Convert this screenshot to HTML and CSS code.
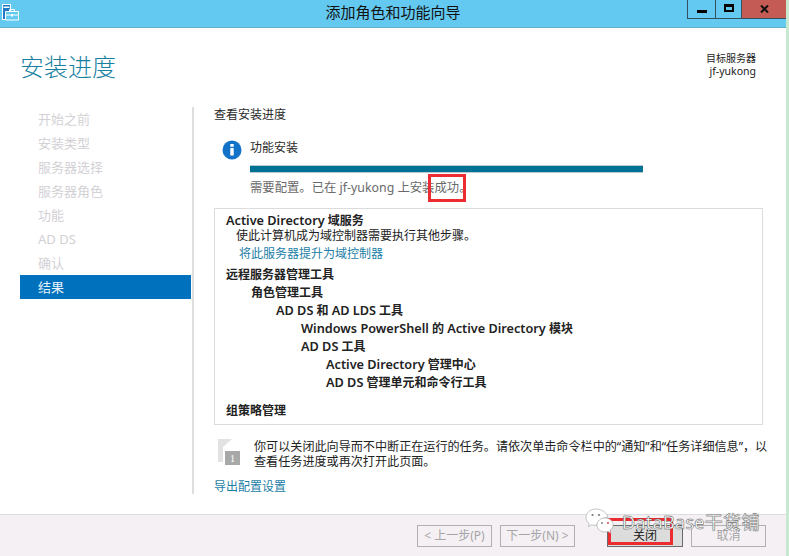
FILE: index.html
```html
<!DOCTYPE html>
<html lang="zh">
<head>
<meta charset="utf-8">
<title>添加角色和功能向导</title>
<link rel="stylesheet" href="styles.css">
</head>
<body>
<div class="window">
  <header class="titlebar">
    <svg class="app-icon" width="17" height="17" viewBox="0 0 17 17">
      <rect x="0.500" y="0.500" width="8" height="15" fill="#1f78c8" stroke="#fff"/>
      <rect x="1.500" y="2.500" width="6" height="1.500" fill="#fff"/>
      <path d="M3.500 7.500h13v8.500h-13z" fill="#63c9f0" stroke="#fff"/>
      <path d="M7.500 7.500V5.500h5v2M3.500 11h13" fill="none" stroke="#fff"/>
      <rect x="9" y="10" width="2" height="2.500" fill="#fff"/>
    </svg>
    <div class="title">添加角色和功能向导</div>
    <div class="controls">
      <div class="ctl ctl-min"><span class="min-glyph"></span></div>
      <div class="ctl ctl-max"><span class="max-glyph"></span></div>
      <div class="ctl ctl-close">
        <svg width="9" height="8" viewBox="0 0 9 8"><path d="M1 0.500L8 7.500M8 0.500L1 7.500" stroke="#111" stroke-width="2" fill="none"/></svg>
      </div>
    </div>
  </header>

  <div class="head">
    <h1 class="page-title">安装进度</h1>
    <div class="server"><div>目标服务器</div><div class="server-name">jf-yukong</div></div>
  </div>

  <div class="body">
    <nav class="nav">
      <div class="nav-item">开始之前</div>
      <div class="nav-item">安装类型</div>
      <div class="nav-item">服务器选择</div>
      <div class="nav-item">服务器角色</div>
      <div class="nav-item">功能</div>
      <div class="nav-item">AD DS</div>
      <div class="nav-item">确认</div>
      <div class="nav-item active">结果</div>
    </nav>
    <main class="main">
      <div class="section-title">查看安装进度</div>
      <div class="status">
        <svg class="info" width="20" height="20" viewBox="0 0 20 20">
          <circle cx="10" cy="10" r="9.500" fill="#1272c8"/>
          <rect x="8.300" y="8" width="3.400" height="7.500" fill="#fff"/>
          <rect x="8.300" y="4" width="3.400" height="2.800" fill="#fff"/>
        </svg>
        <div class="status-body">
          <div class="status-label">功能安装</div>
          <div class="progress"></div>
          <div class="status-text">需要配置。已在 jf-yukong 上安装成功。</div>
        </div>
      </div>
      <div class="results">
        <div class="row b l0 r-first"><span class="en">Active Directory</span> 域服务</div>
        <div class="row l0a">使此计算机成为域控制器需要执行其他步骤。</div>
        <div class="row l0b link">将此服务器提升为域控制器</div>
        <div class="row b l0 gap-a">远程服务器管理工具</div>
        <div class="row b l1">角色管理工具</div>
        <div class="row b l2"><span class="en">AD DS</span> 和 <span class="en">AD LDS</span> 工具</div>
        <div class="row b l3"><span class="en">Windows PowerShell</span> 的 <span class="en">Active Directory</span> 模块</div>
        <div class="row b l3"><span class="en">AD DS</span> 工具</div>
        <div class="row b l4"><span class="en">Active Directory</span> 管理中心</div>
        <div class="row b l4"><span class="en">AD DS</span> 管理单元和命令行工具</div>
        <div class="row b l0 gap-b">组策略管理</div>
      </div>
      <div class="note">
        <svg class="flag" width="22" height="26" viewBox="0 0 22 26">
          <path d="M0 0H14L5 8V23H0z" fill="#e2e2e2"/>
          <rect x="7" y="12" width="15" height="14" fill="#a8a8a8"/>
          <text x="14.500" y="23" text-anchor="middle" font-size="10" font-family="Liberation Serif" fill="#fff">1</text>
        </svg>
        <p class="note-text">你可以关闭此向导而不中断正在运行的任务。请依次单击命令栏中的“通知”和“任务详细信息”，以查看任务进度或再次打开此页面。</p>
      </div>
      <div class="link export">导出配置设置</div>
    </main>
  </div>

  <footer class="footer">
    <button class="btn">&lt; 上一步(P)</button>
    <button class="btn btn-next">下一步(N) &gt;</button>
    <button class="btn btn-close">关闭</button>
    <button class="btn">取消</button>
  </footer>

  <div class="hl hl-success"></div>
  <div class="hl hl-close"></div>
  <div class="watermark">
    <svg width="32" height="26" viewBox="0 0 32 26">
      <path d="M11 1C5 1 1 5 1 9.500c0 2.500 1.200 4.500 3.200 6L3.400 18.500l3.200-1.700c1.400.4 2.800.6 4.400.6 4.500-7 9-8 12-8C22 5 17 1 11 1z" fill="#fff" stroke="#aaa" stroke-width=".7"/>
      <path d="M20 10c-4.500 0-8 3-8 7s3.500 7 8 7c1 0 2-.2 3-.5l2.800 1.500-.7-2.500c1.900-1.300 3-3.300 3-5.500 0-4-3.500-7-8-7z" fill="#fff" stroke="#aaa" stroke-width=".7"/>
      <circle cx="7.500" cy="7" r="1.100" fill="#777"/><circle cx="14" cy="7" r="1.100" fill="#777"/>
      <circle cx="17" cy="15" r=".9" fill="#777"/><circle cx="23" cy="15" r=".9" fill="#e33"/>
    </svg>
    <span class="wm-text">DataBase干货铺</span>
  </div>
  <div class="edge"></div>
</div>
</body>
</html>
```

FILE: styles.css
```css
* { box-sizing: border-box; }
html, body { margin: 0; padding: 0; }
body {
  width: 789px; height: 556px; overflow: hidden; background: #fff;
  font-family: "Noto Sans", "Noto Sans CJK SC", sans-serif;
  font-size: 12px; color: #2a2a2a;
}
.window { position: relative; width: 789px; height: 556px; display: flex; flex-direction: column; }
.edge { position: absolute; right: 0; top: 0; width: 3px; height: 556px; background: #c8e8d0; }

.titlebar {
  height: 28px; flex: none; background: #63c9f0; border-bottom: 1px solid #62aecb;
  display: flex; align-items: flex-start; position: relative;
}
.app-icon { margin: 4px 0 0 2px; flex: none; }
.title {
  position: absolute; left: 0; right: 0; top: 2px; text-align: center;
  font-size: 15px; line-height: 20px; color: #111; padding-right: 3px;
}
.controls { margin-left: auto; margin-right: 3px; display: flex; height: 19px; position: relative; }
.ctl { height: 19px; display: flex; align-items: center; justify-content: center; border-bottom: 1px solid #33505e; border-left: 1px solid #33505e; }
.ctl-min { width: 28px; }
.ctl-max { width: 26px; }
.ctl-close { width: 45px; background: #c45c55; }
.min-glyph { width: 10px; height: 3px; background: #000; margin-top: 4px; }
.max-glyph { width: 10px; height: 8px; border: 2px solid #000; border-top-width: 3px; margin-top: -2px; }

.head { height: 79px; flex: none; display: flex; justify-content: space-between; align-items: flex-start; padding: 0 33px 0 20px; }
.page-title { margin: 22px 0 0; font-size: 24px; line-height: 34px; font-weight: 300; color: #17809f; }
.server { margin-top: 24px; text-align: right; font-size: 10px; line-height: 13px; color: #222; }
.server-name { font-size: 10.500px; }

.body { flex: 1; display: flex; min-height: 0; }
.nav { width: 194px; flex: none; padding-left: 20px; height: 387px; border-right: 2px solid #dedede; margin-right: 20px; }
.nav-item { height: 24px; line-height: 24px; padding-left: 18px; font-size: 13px; color: #d3d1d5; width: 171px; }
.nav-item.active { background: #0071bc; color: #e8f3fb; }

.main { flex: none; width: 549px; display: flex; flex-direction: column; }
.section-title { font-size: 12px; line-height: 14px; margin-top: 1px; }
.status { display: flex; margin: 18px 0 0 8px; }
.info { flex: none; }
.status-body { margin-left: 8px; flex: 1; }
.status-label { font-size: 12px; line-height: 14px; margin-top: 1px; }
.progress { width: 393px; height: 8px; margin-top: 10px; background: #007095; border: 1px solid #b9c9cf; border-width: 1px 0; }
.status-text { margin-top: 8px; font-size: 12.350px; line-height: 14px; color: #6a6a6a; }

.results { margin-top: 13px; height: 217px; border: 1px solid #dcdcdc; padding: 4px 0 0 11px; }
.row { font-size: 12px; line-height: 18px; height: 18px; color: #222; }
.b { font-weight: 600; }
.en { font-size: 12.700px; line-height: 1; }
.r-first { height: 15px; line-height: 16px; }
.l1 { padding-left: 25px; } .l2 { padding-left: 50px; } .l3 { padding-left: 75px; } .l4 { padding-left: 100px; }
.l0a { padding-left: 10px; line-height: 15px; height: 15px; }
.l0b { padding-left: 13px; line-height: 20px; height: 20px; margin-top: 1px; color: #1c7ea6; }
.gap-a { margin-top: 2px; }
.gap-b { margin-top: 10px; }
.link { color: #1c7ea6; }

.note { display: flex; margin-top: 14px; padding-left: 4px; }
.flag { flex: none; }
.note-text { margin: 0 0 0 14px; width: 520px; flex: none; font-size: 12.100px; line-height: 15px; color: #222; }
.export { font-size: 12px; line-height: 14px; margin-top: 11px; }

.footer {
  height: 42px; flex: none; background: #f4f0f4; border-top: 1px solid #dedcde;
  display: flex; justify-content: flex-end; padding: 10px 23px 0 0; gap: 8px;
}
.btn {
  width: 75px; height: 22px; padding: 0; background: #f4f0f4; border: 1px solid #b0b0b0;
  font: inherit; font-size: 12px; line-height: 18px; color: #a6a6a6;
}
.btn-next { margin-right: 24px; }
.btn-close { width: 76px; background: #dcdcdc; color: #222; border-color: #6a6a6a; }

.hl { position: absolute; border: 3px solid #ec2c30; }
.hl-success { left: 428px; top: 174px; width: 38px; height: 28px; }
.hl-close { left: 608px; top: 518px; width: 65px; height: 27px; }

.watermark { position: absolute; left: 585px; top: 508px; display: flex; align-items: center; }
.wm-text { font-size: 18px; line-height: 24px; color: #fff; -webkit-text-stroke: 0.3px #555; text-shadow: 0 0 1px #444; margin: 2px 0 0 5px; letter-spacing: 0.3px; }
```
